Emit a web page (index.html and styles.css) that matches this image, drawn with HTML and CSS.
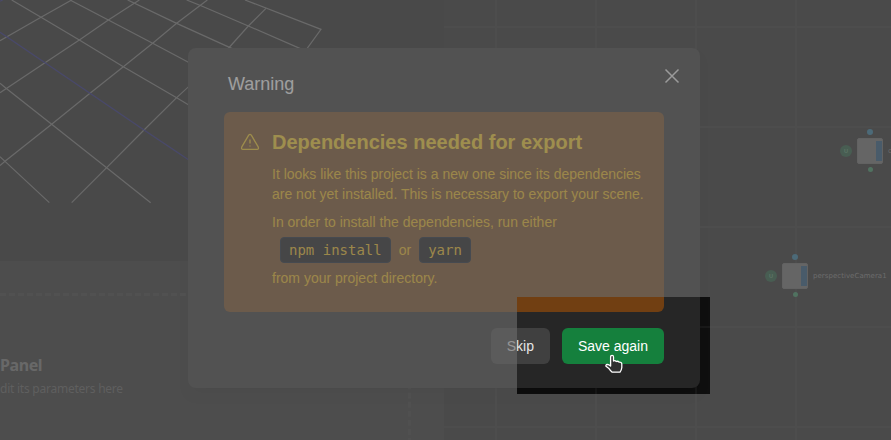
FILE: index.html
```html
<!DOCTYPE html>
<html lang="en">
<head>
<meta charset="utf-8">
<title>Warning</title>
<link rel="stylesheet" href="styles.css">
</head>
<body>
<div class="app">
  <div class="sidebar">
    <div class="viewport">
      <svg width="444" height="261" viewBox="0 0 1332 783" fill="none">
        <g class="grid-lines">
          <path d="M735 0L963 88L915 154M560 0L605 18L745 78L920 154M383 0L530 70L710 152M210 0L325 60L458 130L575 192M35 0L123 52L238 120L370 200L530 293L570 317M0 250L20 266L155 373L320 503L452 608M0 470L15 484L148 608"/>
          <path d="M0 122L123 52L215 0M0 278L135 188L238 120L325 60L418 0M0 497L15 484L155 373L270 280L370 200L458 130L530 70L622 0M215 608L320 503L432 390L530 293L570 256M678 153L745 78L798 25"/>
        </g>
        <path class="axis" d="M0 97L135 188L270 280L432 390L570 482M0 4L8 0"/>
      </svg>
    </div>
    <div class="panel">
      <div class="panel-empty">
        <h3>Panel</h3>
        <p>dit its parameters here</p>
      </div>
    </div>
  </div>
  <div class="canvas">
    <div class="node node-a">
      <span class="badge">U</span><span class="box"></span><span class="name">c</span>
    </div>
    <div class="node node-b">
      <span class="badge">U</span><span class="box"></span><span class="name">perspectiveCamera1</span>
    </div>
  </div>
</div>

<div class="modal">
  <div class="modal-head">
    <h1>Warning</h1>
    <svg class="close" width="16" height="16" viewBox="0 0 16 16"><path d="M1.5 1.5L14.5 14.5M14.5 1.5L1.5 14.5"/></svg>
  </div>
  <div class="alert">
    <svg class="warn" width="20" height="20" viewBox="0 0 20 20"><path d="M8.7 3.1L1.8 14.9Q.9 17.2 3 17.4H17Q19.1 17.2 18.2 14.9L11.3 3.1Q10 1.5 8.7 3.1Z"/><path d="M10 7.5V11.5M10 13.4V14.4"/></svg>
    <div class="alert-body">
      <h2>Dependencies needed for export</h2>
      <p>It looks like this project is a new one since its dependencies are not yet installed. This is necessary to export your scene.</p>
      <p>In order to install the dependencies, run either</p>
      <div class="commands"><code>npm install</code><span>or</span><code>yarn</code></div>
      <p>from your project directory.</p>
    </div>
  </div>
  <div class="actions">
    <button class="btn">Skip</button>
    <button class="btn primary">Save again</button>
  </div>
</div>

<div class="spotlight"></div>
<svg class="pointer" width="20" height="20" viewBox="0 0 20 20"><path d="M6.6 11.4V3Q6.6 1.3 8.1 1.3Q9.5 1.3 9.5 3V7Q11 6.2 12.3 7.5Q14 6.8 15.1 8.1Q17.6 7.8 17.8 10V13.5Q17.6 16 16 18.2H8.2Q6.2 16.6 4.6 14.2L2 12.3Q1.5 10.6 3.2 10.5Q5 10.4 6.6 12Z"/></svg>
</body>
</html>
```
FILE: styles.css
```css
* { box-sizing: border-box; }

body {
  margin: 0;
  width: 891px;
  height: 440px;
  overflow: hidden;
  position: relative;
  font-family: "Liberation Sans", sans-serif;
  background: #0f0f0f;
}

h1, h2, h3, p { margin: 0; }

.app { display: flex; width: 891px; height: 440px; }

.sidebar { width: 444px; height: 440px; display: flex; flex-direction: column; }
.viewport { height: 261px; background: #0d0d0d; }
.viewport svg { display: block; }
.grid-lines { stroke: #686868; stroke-width: 3.6; }
.axis { stroke: #0c0c70; stroke-width: 3.6; }

.panel { flex: 1; background: #171717; padding: 32px 33px 0 0; }
.panel-empty {
  height: 160px;
  border-top: 3px dashed #242424;
  border-right: 3px dashed #222;
  padding-top: 57px;
  font-family: "Noto Sans", sans-serif;
}
.panel-empty h3 { font-size: 16px; line-height: 24px; letter-spacing: -0.4px; color: #666; }
.panel-empty p { font-size: 12px; line-height: 23px; letter-spacing: -0.24px; white-space: nowrap; color: #4b4b4b; }

.canvas {
  flex: 1;
  position: relative;
  overflow: hidden;
  background-color: #0f0f0f;
  background-image:
    linear-gradient(to right, #191919 2px, transparent 2px),
    linear-gradient(to bottom, #191919 2px, transparent 2px);
  background-size: 100px 100px;
  background-position: 51px 26px;
}

.node { position: absolute; display: flex; align-items: center; height: 26px; }
.node-a { left: 396px; top: 138px; }
.node-b { left: 321px; top: 263px; }
.badge {
  width: 12px;
  height: 12px;
  border-radius: 50%;
  background: #0a4526;
  color: #3d8059;
  font: bold 6px/12px "Noto Sans", sans-serif;
  text-align: center;
}
.box {
  position: relative;
  width: 26px;
  height: 26px;
  margin-left: 5px;
  border: 1px solid #545454;
  border-radius: 2px;
  background: #5c5c5c linear-gradient(#0d3f6c, #0d3f6c) 18px 2px / 6px 20px no-repeat;
}
.box::before, .box::after {
  content: "";
  position: absolute;
  left: 9px;
  width: 6px;
  height: 6px;
  border-radius: 50%;
}
.box::before { top: -10px; background: #156a93; }
.box::after { bottom: -9px; left: 9.5px; width: 5px; height: 5px; background: #22804f; }
.name { margin-left: 5px; font: 7px/10px "DejaVu Sans", sans-serif; letter-spacing: .04px; color: #707070; }

.modal {
  position: absolute;
  left: 188px;
  top: 48px;
  width: 512px;
  height: 340px;
  padding: 20px 36px 24px;
  border-radius: 8px;
  background: #262626;
  box-shadow: 0 8px 12px -4px rgba(0, 0, 0, .3);
}
.modal-head { display: flex; justify-content: space-between; height: 44px; padding-left: 4px; }
.modal-head h1 { font-size: 18px; line-height: 32px; font-weight: 400; color: #fff; }
.close { margin-right: -16px; fill: none; stroke: #f5f5f5; stroke-width: 1.5; }

.alert {
  display: flex;
  gap: 12px;
  height: 200px;
  padding: 16px 20px 16px 16px;
  border-radius: 6px;
  background: #713f12;
}
.warn { flex: none; margin-top: 4px; fill: none; stroke: #facc15; stroke-width: 1.3; stroke-linejoin: round; }
.alert-body { font-size: 14px; line-height: 20px; color: #f5bd10; white-space: nowrap; }
.alert-body h2 { font-size: 20px; line-height: 28px; color: #ffd01c; margin-bottom: 8px; }
.alert-body p { width: 374px; white-space: normal; margin-bottom: 8px; }
.commands { display: flex; gap: 8px; align-items: center; height: 26px; margin: -3px 0 5px 8px; }
.commands code {
  height: 26px;
  padding: 3px 8px;
  border: 1px solid #051020;
  border-radius: 4px;
  background: #030508;
  font: 14px/18px "DejaVu Sans Mono", monospace;
}
.commands span { line-height: 26px; }

.actions { display: flex; justify-content: flex-end; gap: 12px; margin-top: 16px; }
.btn {
  height: 36px;
  padding: 0 16px;
  border: 0;
  border-radius: 6px;
  background: #404040;
  color: #e5e5e5;
  font: 14px/20px "Liberation Sans", sans-serif;
}
.btn.primary { background: #15803d; color: #fff; }

/* Everything outside the highlighted area is dimmed by the spread shadow. */
.spotlight {
  position: absolute;
  left: 517px;
  top: 297px;
  width: 193px;
  height: 97px;
  box-shadow: 0 0 0 1000px rgba(106, 106, 106, .65);
}
.pointer { position: absolute; left: 604px; top: 354px; fill: #303030; stroke: #fff; stroke-width: 1.3; stroke-linejoin: round; }
```
